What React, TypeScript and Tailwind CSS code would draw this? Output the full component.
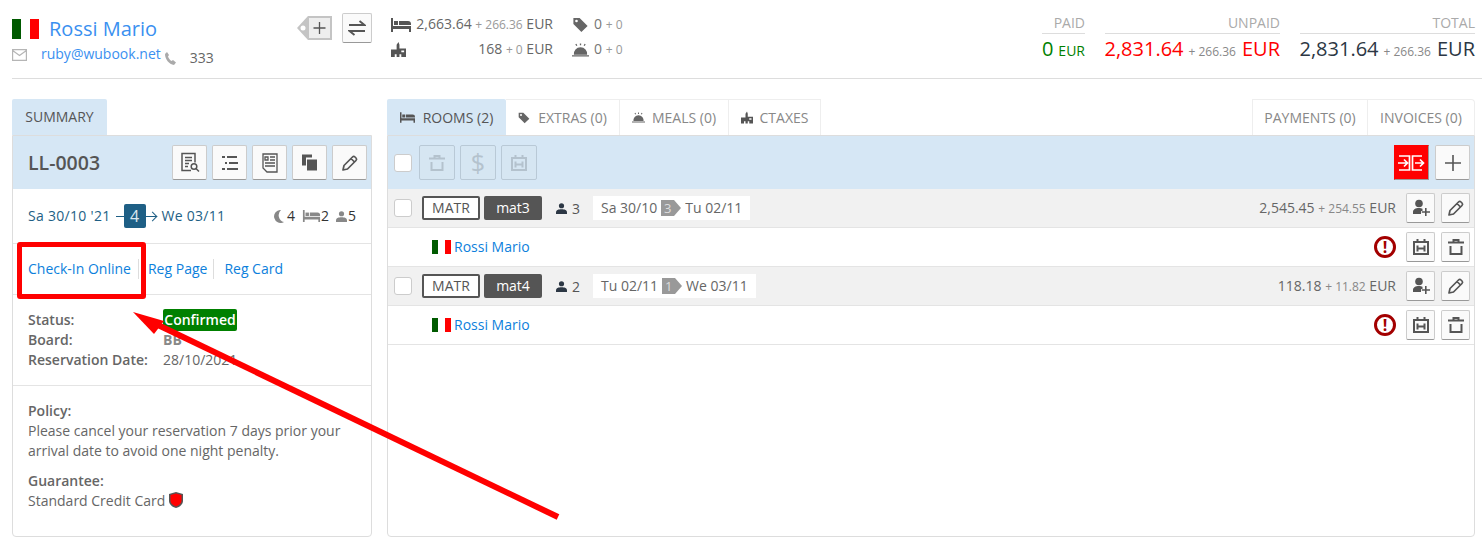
import type { ReactNode } from 'react'

type IconProps = { className?: string }

const Flag = ({ className }: IconProps) => (
	<span className={`flex shrink-0 ${className ?? ''}`}>
		<span className="flex-1 bg-[#005a00]" />
		<span className="flex-1 bg-white" />
		<span className="flex-1 bg-[#ff0000]" />
	</span>
)

const Bed = ({ className }: IconProps) => (
	<svg className={className} viewBox="0 0 20 14" fill="currentColor">
		<path d="M0 0h2v8h18v6h-2v-3H2v3H0z" />
		<rect x="3" y="3" width="4" height="4" />
		<path d="M8 3h9a3 3 0 0 1 3 3v1H8z" />
	</svg>
)

const Tag = ({ className }: IconProps) => (
	<svg className={className} viewBox="0 0 18 18" fill="currentColor">
		<path fillRule="evenodd" d="M1 1h7l9 9-7 7-9-9zM4.500 3a1.500 1.500 0 1 0 0 3 1.500 1.500 0 0 0 0-3z" />
	</svg>
)

const City = ({ className }: IconProps) => (
	<svg className={className} viewBox="0 0 16 16" fill="currentColor">
		<path fillRule="evenodd" d="M6 3l2-3 1 3v4h7v9h-5v-3H9v3H6v-3H4v3H0V8h6zM11 9v2h3V9z" />
	</svg>
)

const Meal = ({ className }: IconProps) => (
	<svg className={className} viewBox="0 0 18 14" fill="currentColor">
		<path d="M9 4a7 7 0 0 1 7 8H2a7 7 0 0 1 7-8zM0 12.500h18V14H0z" />
		<path d="M8.300 0h1.400v2H8.300zM3.500 1l1.200-.6 1 1.800-1.200.6zM14.500 1l-1.200-.6-1 1.800 1.200.6z" />
	</svg>
)

const Person = ({ className }: IconProps) => (
	<svg className={className} viewBox="0 0 14 14" fill="currentColor">
		<circle cx="7" cy="3.500" r="3.300" />
		<path d="M0 14v-2c0-3 3-4 7-4s7 1 7 4v2z" />
	</svg>
)

const Pencil = () => (
	<svg className="h-[18px] w-[18px]" viewBox="0 0 18 18" fill="none" stroke="#555" strokeWidth="1.700" strokeLinejoin="round">
		<path d="M2 16l1-4.500L11.500 3a1.800 1.800 0 0 1 2.500 0l1 1a1.800 1.800 0 0 1 0 2.500L6.500 15zM10 4.500L13.500 8" />
	</svg>
)

const Trash = ({ color = '#555' }: { color?: string }) => (
	<svg className="h-[16px] w-[16px]" viewBox="0 0 16 16" fill="none" stroke={color} strokeWidth="2">
		<path d="M0 3.500h16M5.500 3.500V1h5v2.500M2.500 7v8h11V7" />
	</svg>
)

const Stay = ({ color = '#555' }: { color?: string }) => (
	<svg className="h-[16px] w-[16px]" viewBox="0 0 16 16" fill="none" stroke={color} strokeWidth="2">
		<path d="M1 3h14v12H1zM4.500 0v3M11.500 0v3M4.500 6.500v6M11.500 6.500v6M4.500 9.500h7" />
	</svg>
)

const AddPerson = () => (
	<svg className="h-[18px] w-[18px]" viewBox="0 0 18 18" fill="#555">
		<circle cx="7" cy="4.500" r="3.800" />
		<path d="M1 15v-2c0-2.500 2.500-4 6-4 1.500 0 2.500.3 3.500.8V12H9v3z" />
		<path d="M13 9h1.600v3.200H18v1.600h-3.400V17H13v-3.200H9.800v-1.600H13z" />
	</svg>
)

const IconBtn = ({ children, className }: { children: ReactNode; className?: string }) => (
	<span
		className={`flex h-[30px] w-[29px] shrink-0 items-center justify-center rounded-[2px] border border-[#ccc] border-b-[#999] bg-[#fafafa] ${className ?? ''}`}
	>
		{children}
	</span>
)

const SummaryBtn = ({ children }: { children: ReactNode }) => (
	<span className="flex h-[35px] w-[35px] shrink-0 items-center justify-center rounded-[2px] border border-[#ccc] border-b-[#999] bg-[#fafafa]">
		{children}
	</span>
)

const DisabledBtn = ({ children }: { children: ReactNode }) => (
	<span className="flex h-[35px] w-[36px] shrink-0 items-center justify-center rounded-[2px] border border-[#b9c9d6] bg-[#d6e6f2]">
		{children}
	</span>
)

const Checkbox = () => <span className="block h-[18px] w-[18px] shrink-0 rounded-[3px] border border-[#ccc] bg-white" />

const Total = ({
	label,
	value,
	extra,
	color,
	className,
}: {
	label: string
	value: string
	extra?: string
	color: string
	className: string
}) => (
	<div className={`flex flex-col ${className}`}>
		<div className="h-[20px] border-b border-[#ddd] text-right text-[14px] leading-[18px] text-[#aaa]">{label}</div>
		<div className={`flex items-baseline justify-end whitespace-nowrap text-[20px] leading-[30px] ${color}`}>
			{value}
			{extra ? (
				<span className="ml-[5px] mr-[6px] text-[12px] text-[#888]">{extra}</span>
			) : (
				<span className="w-[5px]" />
			)}
			<span className={extra ? 'text-[20px]' : 'text-[14px]'}>EUR</span>
		</div>
	</div>
)

const Room = ({
	name,
	guests,
	from,
	nights,
	to,
	total,
	tax,
}: {
	name: string
	guests: number
	from: string
	nights: number
	to: string
	total: string
	tax: string
}) => (
	<>
		<div className="flex h-[39px] items-center border-b border-[#e4e4e4] bg-[#f1f1f1] pl-[6px] pr-[4px]">
			<Checkbox />
			<span className="ml-[10px] flex h-[24px] w-[58px] items-center justify-center rounded-[2px] border-2 border-[#555] bg-white text-[14px] text-[#555]">
				MATR
			</span>
			<span className="ml-[4px] flex h-[24px] w-[58px] items-center justify-center rounded-[2px] bg-[#555] text-[14px] text-white">
				{name}
			</span>
			<Person className="ml-[14px] h-[13px] w-[11px] text-[#2c3744]" />
			<span className="ml-[5px] mt-[2px] text-[14px] text-[#555]">{guests}</span>
			<span className="ml-[13px] flex h-[24px] items-center bg-white px-[8px] text-[14px] text-[#666]">
				{from}
				<span className="ml-[4px] flex h-[16px] items-center">
					<span className="flex h-[16px] w-[13px] items-center justify-center bg-[#999] text-[13px] text-[#ddd]">{nights}</span>
					<span className="h-0 w-0 border-y-[8px] border-l-[7px] border-y-transparent border-l-[#999]" />
				</span>
				<span className="ml-[4px]">{to}</span>
			</span>
			<span className="ml-auto text-[14px] text-[#666]">
				{total} <span className="text-[12px] text-[#888]">+ {tax}</span> EUR
			</span>
			<IconBtn className="ml-[10px]">
				<AddPerson />
			</IconBtn>
			<IconBtn className="ml-[6px]">
				<Pencil />
			</IconBtn>
		</div>
		<div className="flex h-[39px] items-center border-b border-[#e4e4e4] bg-white pl-[44px] pr-[4px]">
			<Flag className="h-[14px] w-[19px]" />
			<span className="ml-[3px] text-[14px] text-[#0d7fdc]">Rossi Mario</span>
			<span className="ml-auto flex h-[22px] w-[22px] items-center justify-center rounded-full border-[3px] border-[#a30000] text-[16px] font-bold leading-none text-[#a30000]">
				!
			</span>
			<IconBtn className="ml-[10px]">
				<Stay />
			</IconBtn>
			<IconBtn className="ml-[6px]">
				<Trash />
			</IconBtn>
		</div>
	</>
)

export default function App() {
	return (
		<div className="relative h-[559px] w-[1482px] overflow-hidden bg-white pl-3 pr-[7px] font-['Open_Sans',sans-serif] text-[14px] leading-[20px] text-[#555]">
			{/* Top bar */}
			<div className="-mr-[7px] flex h-[79px] border-b border-[#ddd] pr-[7px]">
				<div className="w-[285px] pt-[14px]">
					<div className="flex items-center">
						<Flag className="h-[20px] w-[27px]" />
						<span className="ml-[10px] text-[20px] leading-[30px] text-[#3a90f0]">Rossi Mario</span>
					</div>
					<div className="flex">
						<svg className="mt-[5px] h-[12px] w-[15px]" viewBox="0 0 15 12" fill="none" stroke="#b5b5b5" strokeWidth="1.200">
							<path d="M.6.6h13.800v10.800H.6zM.6 1.500l6.900 5 6.900-5" />
						</svg>
						<span className="ml-[14px] text-[14px] text-[#3a90f0]">ruby@wubook.net</span>
						<svg className="ml-[3px] mt-[8px] h-[13px] w-[12px]" viewBox="0 0 12 13" fill="#aaa">
							<path d="M1 2l2-2 2 3-1 1.500c.5 1.800 2 3.500 3.500 4.500L9 8l3 2.500L10 13C5 12.500 1 7 1 2z" />
						</svg>
						<span className="ml-[14px] mt-[4px] text-[14px] text-[#666]">333</span>
					</div>
				</div>
				<div className="flex h-fit items-start pt-[13px]">
					<svg className="mt-[3px] h-[24px] w-[35px]" viewBox="0 0 35 24">
						<path d="M11 0h24v24H11L0 12z" fill="#c4c4c4" />
						<rect x="12" y="2" width="21" height="20" fill="#eee" />
						<circle cx="6" cy="12" r="2.500" fill="#fff" />
						<path d="M22.500 6v12M16.500 12h12" stroke="#555" strokeWidth="1.300" />
					</svg>
					<span className="ml-[10px] flex h-[30px] w-[30px] items-center justify-center rounded-[2px] border border-[#ccc] border-b-[#999] bg-[#fafafa]">
						<svg className="h-[16px] w-[18px]" viewBox="0 0 18 16" fill="none" stroke="#555" strokeWidth="2">
							<path d="M1 5h15.500L11.500 1M17 11H1.500L6.500 15" />
						</svg>
					</span>
				</div>
				<div className="ml-[19px] pt-[12px]">
					<div className="flex h-[25px] items-center">
						<Bed className="h-[14px] w-[20px] text-[#555]" />
						<span className="ml-auto w-[142px] whitespace-nowrap text-right text-[14px] text-[#666]">
							2,663.64 <span className="text-[12px] text-[#999]">+ 266.36</span> EUR
						</span>
						<Tag className="ml-[19px] h-[16px] w-[17px] text-[#666]" />
						<span className="ml-[5px] text-[14px] text-[#777]">
							0 <span className="text-[12px] text-[#999]">+ 0</span>
						</span>
					</div>
					<div className="flex h-[25px] items-center">
						<City className="h-[15px] w-[15px] text-[#555]" />
						<span className="ml-auto w-[142px] whitespace-nowrap text-right text-[14px] text-[#666]">
							168 <span className="text-[12px] text-[#999]">+ 0</span> EUR
						</span>
						<Meal className="ml-[19px] h-[14px] w-[17px] text-[#666]" />
						<span className="ml-[5px] text-[14px] text-[#777]">
							0 <span className="text-[12px] text-[#999]">+ 0</span>
						</span>
					</div>
				</div>
				<div className="ml-auto flex gap-[20px] pt-[14px]">
					<Total label="PAID" value="0" color="text-[#008000]" className="w-[43px]" />
					<Total label="UNPAID" value="2,831.64" extra="+ 266.36" color="text-[#ff0000]" className="w-[175px]" />
					<Total label="TOTAL" value="2,831.64" extra="+ 266.36" color="text-[#2c3744]" className="w-[175px]" />
				</div>
			</div>

			<div className="mt-[20px] flex gap-[15px]">
				{/* Summary column */}
				<div className="w-[360px] shrink-0">
					<div className="flex h-[36px] w-[95px] items-center justify-center rounded-t-[2px] bg-[#d6e7f5] text-[14px] text-[#555]">
						SUMMARY
					</div>
					<div className="h-[402px] rounded-b-[4px] border border-[#ddd]">
						<div className="flex h-[53px] items-center bg-[#d6e7f5] pl-[15px] pr-[4px]">
							<span className="text-[19.5px] font-semibold text-[#555]">LL-0003</span>
							<div className="ml-auto flex gap-[5px]">
								<SummaryBtn>
									<svg className="h-[21px] w-[20px]" viewBox="0 0 20 20" fill="none" stroke="#555" strokeWidth="1.500">
										<path d="M11 18H2V1h13v9M5 5h7M5 8h7M5 11h4M5 14h3" />
										<circle cx="14" cy="14" r="2.800" />
										<path d="M16 16l3 3" />
									</svg>
								</SummaryBtn>
								<SummaryBtn>
									<svg className="h-[14px] w-[16px]" viewBox="0 0 16 14" stroke="#555" strokeWidth="1.800">
										<path d="M0 1h3M5 1h10M3 7h2M7 7h9M0 13h3M5 13h11" />
									</svg>
								</SummaryBtn>
								<SummaryBtn>
									<svg className="h-[20px] w-[16px]" viewBox="0 0 16 20" fill="none" stroke="#555" strokeWidth="1.300">
										<path d="M1 1h14v18H5l-4-4zM3 4h3v3H3zM8 4h5M8 7h5M3 10h10M3 13h10" />
									</svg>
								</SummaryBtn>
								<SummaryBtn>
									<svg className="h-[17px] w-[15px]" viewBox="0 0 15 16" fill="#555">
										<path d="M0 0h10v3H4v8H0z" />
										<path d="M5 5h10v11H5z" />
									</svg>
								</SummaryBtn>
								<SummaryBtn>
									<Pencil />
								</SummaryBtn>
							</div>
						</div>
						<div className="flex h-[55px] items-center border-b border-[#e4e4e4] pl-[15px] pr-[15px]">
							<span className="text-[14px] tracking-[0.3px] text-[#1e5f85]">Sa 30/10 '21</span>
							<span className="relative ml-[5px] flex h-[24px] w-[41px] items-center pl-[8px]">
								<span className="absolute left-0 right-0 h-[1px] bg-[#1e5f85]" />
								<span className="relative flex h-[24px] w-[22px] items-center justify-center rounded-[2px] bg-[#1e5f85] text-[16px] text-[#dce8f0]">
									4
								</span>
								<span className="absolute right-[1px] h-[7px] w-[7px] rotate-45 border-r border-t border-[#1e5f85]" />
							</span>
							<span className="ml-[5px] text-[14px] tracking-[0.25px] text-[#1e5f85]">We 03/11</span>
							<span className="ml-auto flex items-center text-[14px] text-[#333]">
								<svg className="h-[13px] w-[11px]" viewBox="0 0 11 13" fill="#888">
									<path d="M8 0a6.500 6.500 0 1 0 3 12A7 7 0 0 1 8 0z" />
								</svg>
								<span className="ml-[3px]">4</span>
								<Bed className="ml-[7px] h-[12px] w-[19px] text-[#888]" />
								<span>2</span>
								<Person className="ml-[7px] h-[13px] w-[11px] text-[#888]" />
								<span className="ml-[1px]">5</span>
							</span>
						</div>
						<div className="flex h-[51px] border-b border-[#e4e4e4] pl-[15px] pt-[15px] text-[14px] text-[#0d7fdc]">
							<span className="h-[20px] border-r border-[#ddd] pr-[7px]">Check-In Online</span>
							<span className="h-[20px] border-r border-[#ddd] pl-[9px] pr-[6px]">Reg Page</span>
							<span className="pl-[10px]">Reg Card</span>
						</div>
						<div className="h-[91px] border-b border-[#e4e4e4] pl-[15px] pt-[15px] text-[14px]">
							<div className="flex h-[20px] items-center">
								<span className="w-[135px] font-semibold text-[#666]">Status:</span>
								<span className="flex h-[22px] w-[74px] items-center justify-center rounded-[2px] bg-[#008000] font-semibold text-white">Confirmed</span>
							</div>
							<div className="flex h-[20px] items-center">
								<span className="w-[135px] font-semibold text-[#666]">Board:</span>
								<span className="font-bold text-[#888]">BB</span>
							</div>
							<div className="flex h-[20px] items-center">
								<span className="w-[135px] font-semibold text-[#666]">Reservation Date:</span>
								<span className="text-[#666]">28/10/2021</span>
							</div>
						</div>
						<div className="pl-[15px] pr-[15px] pt-[15px] text-[14px] text-[#666]">
							<div className="font-semibold">Policy:</div>
							<div>
								Please cancel your reservation 7 days prior your
								<br />
								arrival date to avoid one night penalty.
							</div>
							<div className="mt-[10px] font-semibold">Guarantee:</div>
							<div className="flex items-center">
								Standard Credit Card
								<svg className="mb-[3px] ml-[4px] h-[16px] w-[14px]" viewBox="0 0 14 16">
									<path d="M7 0l7 2v7c0 3-3 6-7 7-4-1-7-4-7-7V2z" fill="#555" />
									<path d="M7 1.500l5.500 1.500v6c0 2.500-2.500 4.500-5.500 5.500C4 13.500 1.500 11.500 1.500 9V3z" fill="#ff0000" />
								</svg>
							</div>
						</div>
					</div>
				</div>

				{/* Rooms column */}
				<div className="flex-1">
					<div className="flex h-[36px] text-[14px] text-[#888]">
						<span className="flex w-[119px] items-center justify-center gap-[8px] rounded-t-[2px] bg-[#d6e7f5] pt-[1px] text-[#555]">
							<Bed className="h-[11px] w-[15px]" />
							ROOMS (2)
						</span>
						<span className="flex w-[114px] items-center justify-center gap-[8px] border-r border-t border-[#eee]">
							<Tag className="h-[12px] w-[12px] text-[#666]" />
							EXTRAS (0)
						</span>
						<span className="flex w-[109px] items-center justify-center gap-[7px] border-r border-t border-[#eee]">
							<Meal className="h-[11px] w-[13px] text-[#666]" />
							MEALS (0)
						</span>
						<span className="flex w-[92px] items-center justify-center gap-[7px] border-r border-t border-[#eee]">
							<City className="h-[13px] w-[12px] text-[#555]" />
							CTAXES
						</span>
						<span className="ml-auto flex w-[116px] items-center justify-center border-x border-t border-[#eee]">PAYMENTS (0)</span>
						<span className="flex w-[107px] items-center justify-center rounded-tr-[4px] border-r border-t border-[#eee]">INVOICES (0)</span>
					</div>
					<div className="h-[402px] rounded-b-[4px] border border-[#ddd]">
						<div className="flex h-[53px] items-center bg-[#d6e7f5] pl-[6px] pr-[4px]">
							<Checkbox />
							<div className="ml-[7px] flex gap-[5px]">
								<DisabledBtn>
									<Trash color="#b4c2cd" />
								</DisabledBtn>
								<DisabledBtn>
									<span className="text-[25px] leading-none text-[#b4c2cd]">$</span>
								</DisabledBtn>
								<DisabledBtn>
									<Stay color="#b4c2cd" />
								</DisabledBtn>
							</div>
							<span className="ml-auto flex h-[35px] w-[35px] items-center justify-center border border-[#999] border-t-[#ff0000] border-l-[#ff0000] bg-[#ff0000]">
								<svg className="h-[16px] w-[27px]" viewBox="0 0 27 16" fill="none" stroke="#fff" strokeWidth="1.700">
									<path d="M0 8h9M6 4.500L9.500 8 6 11.500M1 1h10.500v14H1M26 8h-9M22 4.500L25.500 8 22 11.500M24 1H14.500v14H24" />
								</svg>
							</span>
							<span className="ml-[6px] flex h-[35px] w-[35px] items-center justify-center rounded-[2px] border border-[#ccc] border-b-[#999] bg-[#fafafa]">
								<svg className="h-[16px] w-[16px]" viewBox="0 0 16 16" stroke="#555" strokeWidth="1.600">
									<path d="M8 0v16M0 8h16" />
								</svg>
							</span>
						</div>
						<Room name="mat3" guests={3} from="Sa 30/10" nights={3} to="Tu 02/11" total="2,545.45" tax="254.55" />
						<Room name="mat4" guests={2} from="Tu 02/11" nights={1} to="We 03/11" total="118.18" tax="11.82" />
					</div>
				</div>
			</div>

			{/* Annotation drawn over the screenshot */}
			<span className="absolute left-[17px] top-[242px] h-[57px] w-[129px] rounded-[3px] border-[5px] border-[#ff0000]" />
			<svg className="absolute left-0 top-0 h-[559px] w-[1482px]" viewBox="0 0 1482 559" fill="#ff0000">
				<path d="M558 517L158 325" stroke="#ff0000" strokeWidth="6" />
				<path d="M133 312L164 321L154 334z" />
			</svg>
		</div>
	)
}
